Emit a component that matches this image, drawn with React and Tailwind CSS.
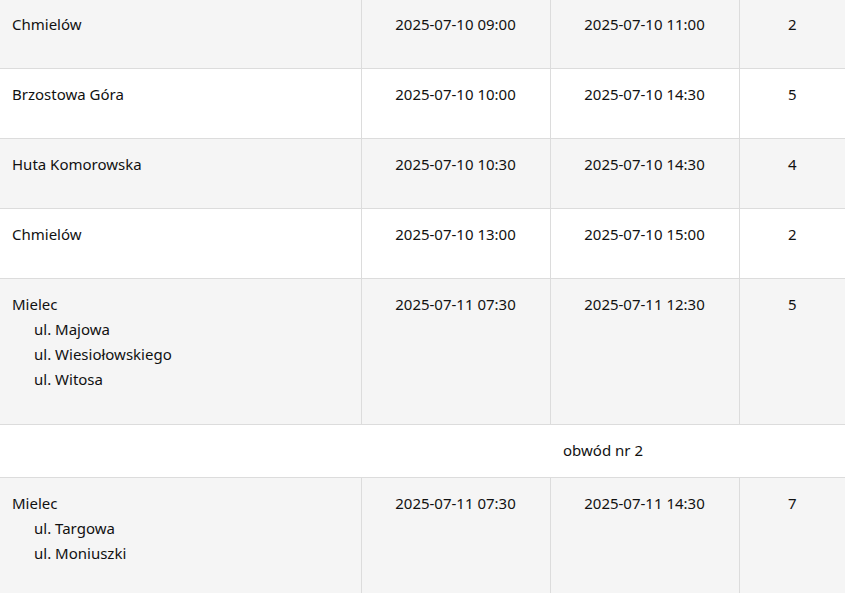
import React from 'react';

const rows = [
  { place: 'Chmielów', streets: [], from: '2025-07-10 09:00', to: '2025-07-10 11:00', n: 2 },
  { place: 'Brzostowa Góra', streets: [], from: '2025-07-10 10:00', to: '2025-07-10 14:30', n: 5 },
  { place: 'Huta Komorowska', streets: [], from: '2025-07-10 10:30', to: '2025-07-10 14:30', n: 4 },
  { place: 'Chmielów', streets: [], from: '2025-07-10 13:00', to: '2025-07-10 15:00', n: 2 },
  {
    place: 'Mielec',
    streets: ['ul. Majowa', 'ul. Wiesiołowskiego', 'ul. Witosa'],
    from: '2025-07-11 07:30',
    to: '2025-07-11 12:30',
    n: 5,
  },
  { header: 'obwód nr 2' },
  {
    place: 'Mielec',
    streets: ['ul. Targowa', 'ul. Moniuszki'],
    from: '2025-07-11 07:30',
    to: '2025-07-11 14:30',
    n: 7,
  },
];

const cell = 'align-top pt-[13px] pb-[31px] border-b border-[#dcdcdc]';

export default function App() {
  let stripe = 0;
  return (
    <div className="w-[845px] h-[593px] overflow-hidden bg-white text-[#111] text-[15px] leading-[25px] font-['Noto_Sans',sans-serif]">
      <table className="w-[845px] border-collapse table-fixed -mt-[1px]">
        <colgroup>
          <col className="w-[361px]" />
          <col className="w-[189px]" />
          <col className="w-[189px]" />
          <col className="w-[106px]" />
        </colgroup>
        <tbody>
          {rows.map((r, i) => {
            if (r.header) {
              stripe = 0;
              return (
                <tr key={i} className="bg-white">
                  <td className="h-[53px] border-b border-[#dcdcdc]"></td>
                  <td colSpan={3} className="h-[53px] text-center align-middle border-b border-[#dcdcdc]">
                    {r.header}
                  </td>
                </tr>
              );
            }
            const bg = stripe % 2 === 0 ? 'bg-[#f5f5f5]' : 'bg-white';
            stripe++;
            return (
              <tr key={i} className={bg}>
                <td className={`${cell} pl-3 border-r`}>
                  <div>{r.place}</div>
                  {r.streets.map((s) => (
                    <div key={s} className="pl-[22px] leading-[25.2px]">{s}</div>
                  ))}
                </td>
                <td className={`${cell} text-center border-r`}>{r.from}</td>
                <td className={`${cell} text-center border-r`}>{r.to}</td>
                <td className={`${cell} text-center`}>{r.n}</td>
              </tr>
            );
          })}
        </tbody>
      </table>
    </div>
  );
}
